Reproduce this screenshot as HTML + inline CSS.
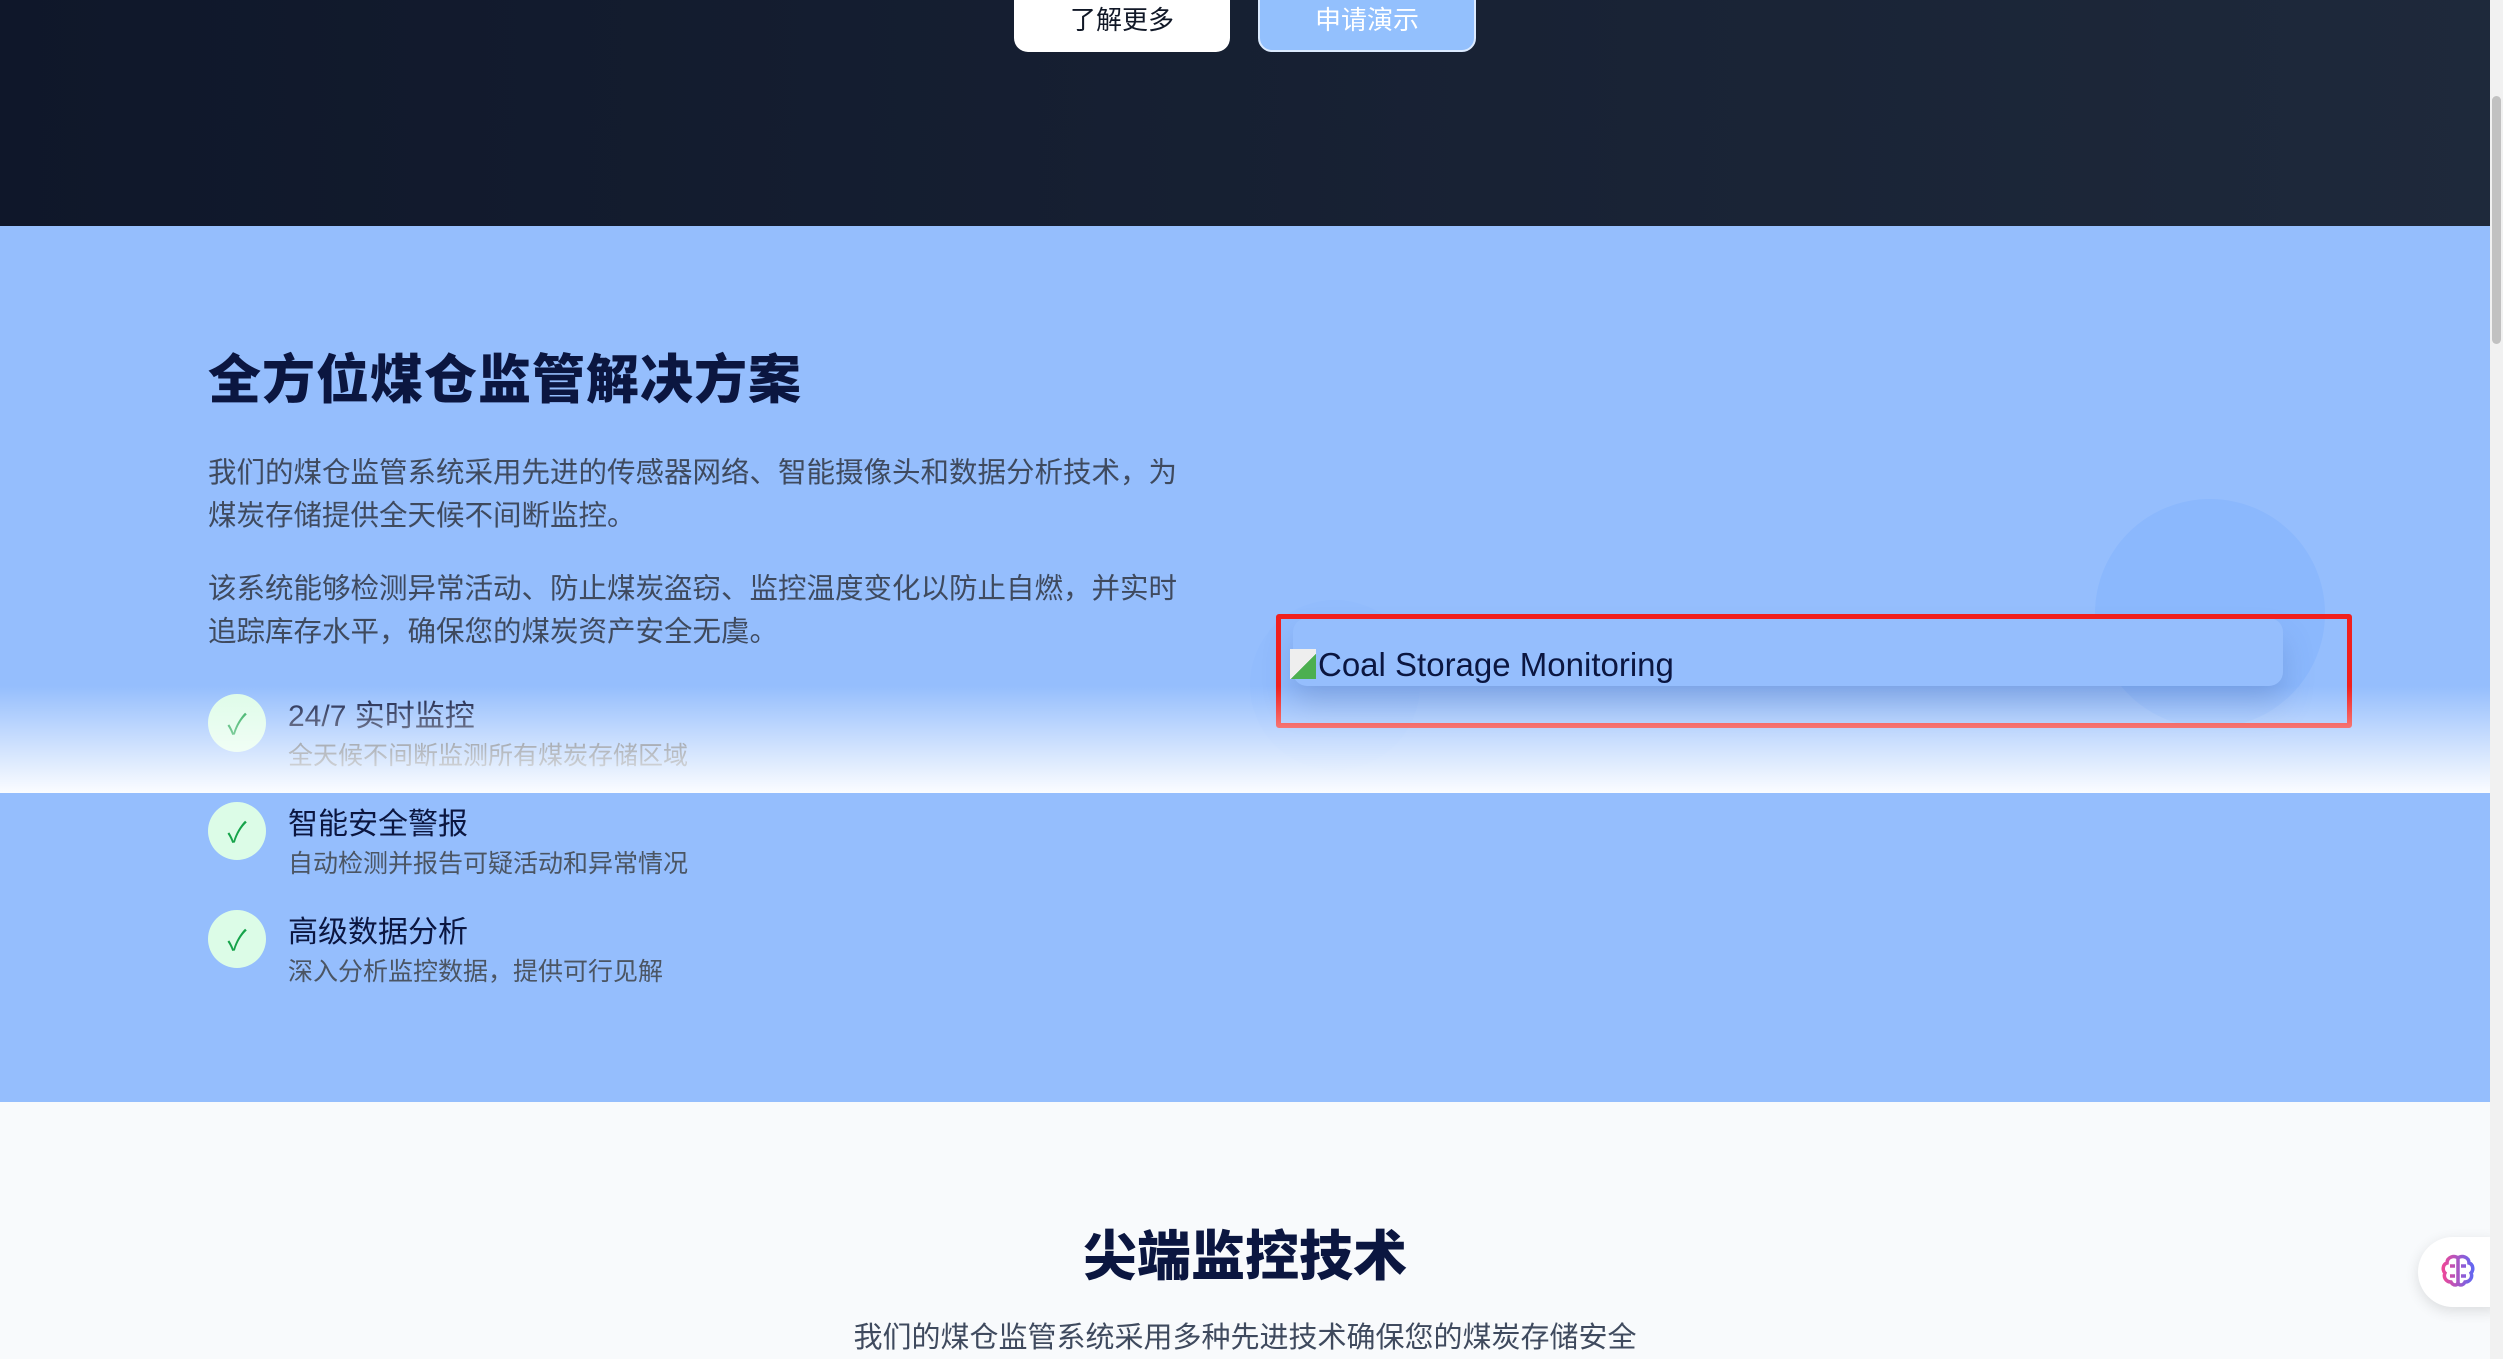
<!DOCTYPE html>
<html><head><meta charset="utf-8"><style>
*{margin:0;padding:0;box-sizing:border-box}
body{width:2503px;height:1359px;overflow:hidden;font-family:"Liberation Sans","Noto Sans CJK SC",sans-serif;background:#f8fafc;position:relative}
.hdr{position:absolute;left:0;top:0;width:2490px;height:226px;background:linear-gradient(90deg,#0f172a,#1e293b)}
.btn{position:absolute;top:-20px;height:72px;border-radius:14px;font-size:26px;display:flex;align-items:center;justify-content:center;padding-top:4px}
.b1{left:1014px;width:216px;background:#fff;color:#111827}
.b2{left:1258px;width:218px;background:#93c0fd;color:#fff;border:2px solid #dbeafe}
.sec{position:absolute;left:0;top:226px;width:2490px;height:876px;background:#95befd}
.fade{position:absolute;left:0;top:686px;width:2490px;height:107px;background:linear-gradient(180deg,rgba(255,255,255,0),rgba(255,255,255,.97));z-index:5}
h2{position:absolute;left:208px;top:338px;font-size:53px;font-weight:900;color:#0b1640;letter-spacing:1px}
.p{position:absolute;left:208px;width:985px;font-size:28.5px;line-height:43px;color:#3f4a5e}
.item{position:absolute;left:208px}
.ck{position:absolute;left:0;top:0;width:58px;height:58px;border-radius:50%;background:#dcfce7;color:#16a34a;font-size:28px;display:flex;align-items:center;justify-content:center}
.t{position:absolute;left:80px;top:-3px;white-space:nowrap;font-size:30px;color:#0b1640}
.s{position:absolute;left:80px;top:42px;white-space:nowrap;font-size:25px;color:#4b5563}
.circ{position:absolute;border-radius:50%;background:#8bb8fd}
.imgbox{position:absolute;left:1293px;top:618px;width:990px;height:68px;border-radius:14px;box-shadow:0 20px 30px rgba(60,90,160,.25);background:#95befd}
.red{position:absolute;left:1276px;top:614px;width:1076px;height:114px;border:5px solid #f0201e;border-radius:3px;z-index:4}
.cap{position:absolute;left:1290px;top:646px;font-size:33px;color:#0b1640;font-family:"Liberation Sans",sans-serif}
h3{position:absolute;left:0;width:2490px;text-align:center;top:1212px;font-size:54px;font-weight:900;color:#0b1640}
.sub{position:absolute;left:0;width:2490px;text-align:center;top:1314px;font-size:29px;color:#3f4a5e}
.sb{position:absolute;left:2490px;top:0;width:13px;height:1359px;background:#f1f1f1}
.th{position:absolute;left:2492px;top:96px;width:9px;height:248px;border-radius:5px;background:#c1c1c1}
.fab{position:absolute;left:2418px;top:1237px;width:80px;height:70px;border-radius:35px 0 0 35px;background:#fff;box-shadow:0 4px 14px rgba(0,0,0,.12)}
</style></head><body>
<div class="hdr"></div>
<div class="btn b1">了解更多</div>
<div class="btn b2">申请演示</div>
<div class="sec"></div>
<div class="circ" style="left:2095px;top:499px;width:230px;height:229px"></div>
<div class="circ" style="left:1250px;top:600px;width:170px;height:170px;background:#92bcfd"></div>
<h2>全方位煤仓监管解决方案</h2>
<div class="p" style="top:452px">我们的煤仓监管系统采用先进的传感器网络、智能摄像头和数据分析技术，为煤炭存储提供全天候不间断监控。</div>
<div class="p" style="top:568px">该系统能够检测异常活动、防止煤炭盗窃、监控温度变化以防止自燃，并实时追踪库存水平，确保您的煤炭资产安全无虞。</div>
<div class="item" style="top:694px"><div class="ck">✓</div><div class="t">24/7 实时监控</div><div class="s">全天候不间断监测所有煤炭存储区域</div></div>
<div class="item" style="top:802px"><div class="ck">✓</div><div class="t">智能安全警报</div><div class="s">自动检测并报告可疑活动和异常情况</div></div>
<div class="item" style="top:910px"><div class="ck">✓</div><div class="t">高级数据分析</div><div class="s">深入分析监控数据，提供可行见解</div></div>
<div class="imgbox"></div>
<div class="cap"><span style="display:inline-block;width:26px;height:30px;vertical-align:-3px;background:linear-gradient(135deg,#eee 55%,#4caf50 55%);margin-right:2px"></span>Coal Storage Monitoring</div>
<div class="red"></div>
<div class="fade"></div>
<h3>尖端监控技术</h3>
<div class="sub">我们的煤仓监管系统采用多种先进技术确保您的煤炭存储安全</div>
<div class="fab"><svg width="40" height="40" viewBox="0 0 40 40" style="position:absolute;left:20px;top:15px"><defs><linearGradient id="g" x1="0" x2="1"><stop offset="0" stop-color="#ec4899"/><stop offset="1" stop-color="#6366f1"/></linearGradient></defs><path d="M20 6c-4-3-11-1-11 5-4 1-5 7-2 10-2 4 1 9 6 9 2 4 7 4 7 0zM20 6c4-3 11-1 11 5 4 1 5 7 2 10 2 4-1 9-6 9-2 4-7 4-7 0zM12 14h5M23 14h5M12 24h5M23 24h5" fill="none" stroke="url(#g)" stroke-width="3.5"/></svg></div>
<div class="sb"></div><div class="th"></div>
</body></html>
